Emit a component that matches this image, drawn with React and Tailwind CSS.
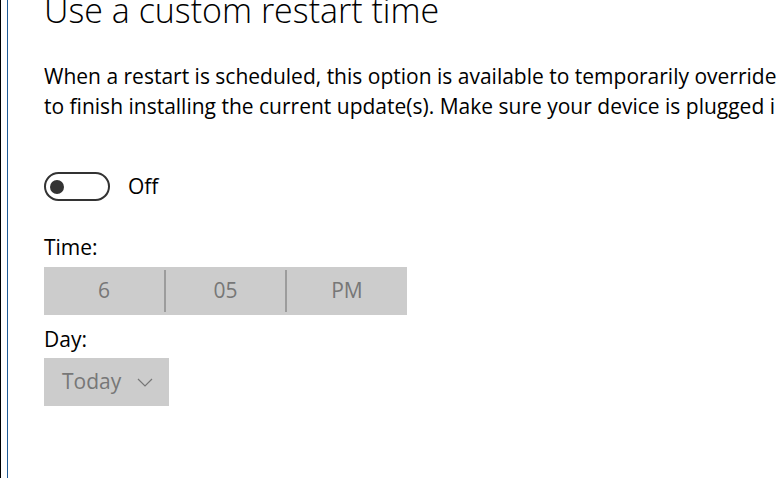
import React from 'react';

const font = { fontFamily: '"Segoe UI", "Open Sans", "Noto Sans", sans-serif' };

const App = () => {
  return (
    <div className="w-[776px] h-[478px] overflow-hidden bg-white flex" style={font}>
      <div className="w-px h-full bg-black" />
      <div className="w-[6px] h-full bg-white" />
      <div className="w-px h-full bg-[#1f5b96]" />
      <main className="flex-1 pl-[36px] flex flex-col text-black min-w-0">
        <h1 className="-mt-[12px] text-[34px] leading-[44px] font-light whitespace-nowrap">Use a custom restart time</h1>
        <div className="mt-[29px] text-[21px] leading-[30px] whitespace-nowrap">
          <p>When a restart is scheduled, this option is available to temporarily override</p>
          <p>to finish installing the current update(s). Make sure your device is plugged in</p>
        </div>

        <div className="mt-[51px] flex items-center gap-[18px] h-[29px]">
          <div className="w-[66px] h-[29px] rounded-full border-2 border-[#333] flex items-center pl-[4px]">
            <div className="w-[14px] h-[14px] rounded-full bg-[#333]" />
          </div>
          <span className="text-[21px]">Off</span>
        </div>

        <label className="mt-[33px] text-[21px] leading-[26px]">Time:</label>
        <div className="mt-[7px] w-[363px] h-[48px] bg-[#cccccc] flex items-center text-[21px] text-[#777]">
          <span className="w-[120px] text-center">6</span>
          <span className="w-[2px] h-[42px] bg-[#9c9c9c]" />
          <span className="w-[119px] text-center">05</span>
          <span className="w-[2px] h-[42px] bg-[#9c9c9c]" />
          <span className="flex-1 text-center">PM</span>
        </div>

        <label className="mt-[11px] text-[21px] leading-[26px]">Day:</label>
        <div className="mt-[6px] w-[125px] h-[48px] bg-[#cccccc] flex items-center pl-[18px] text-[21px] text-[#777]">
          <span>Today</span>
          <svg className="ml-[16px]" width="16" height="9" viewBox="0 0 16 9" fill="none" stroke="#777" strokeWidth="1.2">
            <path d="M1 1l7 7 7-7" />
          </svg>
        </div>
      </main>
    </div>
  );
};

export default App;
